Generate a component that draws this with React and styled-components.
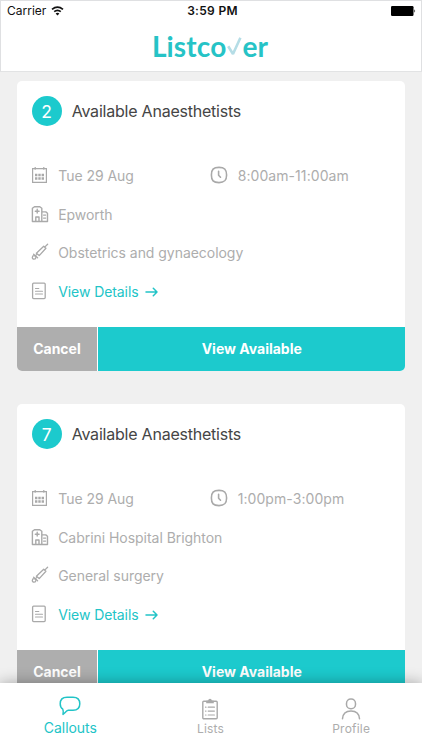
import React from 'react';
import styled, { createGlobalStyle } from 'styled-components';

const GlobalStyle = createGlobalStyle`
  * {
    box-sizing: border-box;
  }
  body {
    margin: 0;
    background: #f0f0f0;
    font-family: Inter, Roboto, sans-serif;
  }
`;
const Screen = styled.div`
  width: 422px;
  height: 750px;
  display: flex;
  flex-direction: column;
  overflow: hidden;
  background: #f0f0f0;
`;
const Header = styled.header`
  flex: none;
  height: 72px;
  background: #fff;
  border: 1px solid #dfe0e2;
  border-bottom-color: #e2e3e4;
`;
const StatusBar = styled.div`
  height: 20px;
  padding: 0 5px 0 6px;
  display: grid;
  grid-template-columns: 1fr auto 1fr;
  align-items: center;
  color: #111;
  font-size: 12px;
  line-height: 20px;
`;
const Carrier = styled.div`
  display: flex;
  align-items: center;
  gap: 5px;
  letter-spacing: 0;
`;
const Clock = styled.div`
  padding-left: 2px;
  font-weight: 600;
  font-size: 12px;
  letter-spacing: 0.3px;
`;
const Battery = styled.div`
  display: flex;
  justify-content: flex-end;
`;
const Logo = styled.div`
  height: 50px;
  padding-right: 2px;
  display: flex;
  align-items: center;
  justify-content: center;
  color: #26c3c6;
  font-family: Lato, sans-serif;
  font-size: 28px;
  font-weight: 700;
  letter-spacing: 0.15px;
  line-height: 50px;
`;
const Content = styled.main`
  flex: 1;
  min-height: 0;
  overflow: hidden;
  padding: 9px 16.7px 0;
  display: flex;
  flex-direction: column;
  gap: 33px;
`;
const Card = styled.section`
  flex: none;
  height: 290px;
  display: flex;
  flex-direction: column;
  overflow: hidden;
  border-radius: 5px;
  background: #fff;
`;
const CardHead = styled.div`
  height: 75px;
  padding: 15px 15px 0;
  display: flex;
  align-items: flex-start;
  gap: 10px;
`;
const Count = styled.div`
  width: 30px;
  height: 30px;
  border-radius: 50%;
  background: #1ccacd;
  color: #fff;
  font-size: 17.5px;
  font-weight: 400;
  line-height: 31px;
  text-align: center;
`;
const Title = styled.h2`
  margin: 0;
  color: #454545;
  font-size: 16px;
  font-weight: 400;
  line-height: 31px;
  letter-spacing: -0.22px;
`;
const Details = styled.div`
  flex: 1;
  padding: 0.5px 0 0 14px;
`;
const DetailRow = styled.div`
  height: 38.5px;
  display: flex;
  align-items: center;
`;
const Detail = styled.div`
  width: ${props => props.$width || 'auto'};
  display: flex;
  align-items: center;
  gap: 6px;
  color: ${props => (props.$link ? '#22c4c7' : '#adadad')};
  font-size: 14px;
  letter-spacing: ${props => props.$spacing || '-0.04px'};
  white-space: nowrap;
`;
const IconSlot = styled.span`
  width: 21.5px;
  flex: none;
  padding-bottom: 1px;
`;
const Icon = styled.svg`
  flex: none;
  display: block;
  fill: none;
  stroke: ${props => props.$color || '#a9a9a9'};
  stroke-width: ${props => props.$stroke || 1.3};
  stroke-linecap: round;
  stroke-linejoin: round;
`;
const Actions = styled.div`
  flex: none;
  height: 44.5px;
  display: flex;
  gap: 1px;
`;
const Action = styled.button`
  width: ${props => (props.$primary ? 'auto' : '80.5px')};
  flex: ${props => (props.$primary ? 1 : 'none')};
  padding: 0;
  border: 0;
  background: ${props => (props.$primary ? '#1ccacd' : '#aeaeae')};
  color: #fff;
  font-family: inherit;
  font-size: 14px;
  font-weight: 700;
  letter-spacing: 0;
`;
const TabBar = styled.nav`
  position: relative;
  flex: none;
  height: 67px;
  display: grid;
  grid-template-columns: repeat(3, 1fr);
  background: #fff;
  box-shadow: 0 0 14px rgba(0, 0, 0, 0.32);
`;
const Tab = styled.div`
  padding: ${props => (props.$active ? '13px 0 0' : '15px 1px 0 0')};
  display: flex;
  flex-direction: column;
  align-items: center;
  gap: ${props => (props.$active ? '2px' : '0')};
  color: ${props => (props.$active ? '#22c4c7' : '#adadad')};
  font-size: ${props => (props.$active ? '14px' : '12px')};
  line-height: ${props => (props.$active ? '20px' : '18px')};
  letter-spacing: ${props => (props.$active ? '-0.05px' : '0.2px')};
`;

const WifiIcon = () => (
  <Icon width="13" height="10" viewBox="0 0 13 10" $color="#111" $stroke="1.7">
    <path d="M1 3.3Q6.5-1.2 12 3.3M3.2 5.7Q6.5 3 9.8 5.7" strokeLinecap="butt" />
    <path d="M6.5 9.4L4.6 7.4Q6.5 6 8.4 7.4Z" fill="#111" stroke="none" />
  </Icon>
);
const BatteryIcon = () => (
  <Icon width="25" height="10" viewBox="0 0 25 10">
    <rect width="22.5" height="10" rx="1.2" fill="#000" stroke="none" />
    <path d="M23.4 3.2Q25 5 23.4 6.8Z" fill="#000" stroke="none" />
  </Icon>
);
const LogoTick = () => (
  <Icon width="16" height="20" viewBox="0 0 16 20" $color="#b5dde6" $stroke="2.6">
    <path d="M2.2 10.3L7 18L14.4 1.8" strokeLinecap="butt" strokeLinejoin="bevel" />
  </Icon>
);
const CalendarIcon = () => (
  <Icon width="18" height="18" viewBox="0 0 18 18" $stroke="1.2">
    <path d="M1.6 2.7H15.4V16.4H1.6ZM4.2 1V3.8M12.8 1V3.8" strokeLinecap="butt" strokeLinejoin="miter" />
    <path d="M4 9H6.4M7.3 9H9.7M10.6 9H13M4 12.5H6.4M7.3 12.5H9.7M10.6 12.5H13" strokeWidth="2.3" strokeLinecap="butt" />
  </Icon>
);
const ClockIcon = () => (
  <Icon width="18" height="18" viewBox="0 0 18 18" $stroke="1.6">
    <path d="M9 1.4C14.7 1.4 16.6 3.5 16.6 9S14.7 16.6 9 16.6S1.4 14.5 1.4 9S3.3 1.4 9 1.4Z" />
    <path d="M8.6 5.3V9.2L10.5 11.2" />
  </Icon>
);
const HospitalIcon = () => (
  <Icon width="18" height="18" viewBox="0 0 18 18" $stroke="1.4">
    <path d="M10.5 16.5H1.4V3.3L3.5 1.7H8.8L10.8 3.3V16.5H16.5V8.2L14.8 6.9H11M4.8 16.2V12H8V16.2" />
    <path d="M6.2 4.3V8.1M4.3 6.2H8.1M12.6 10.1H14.6M12.6 13.1H14.6" />
  </Icon>
);
const SyringeIcon = () => (
  <Icon width="18" height="18" viewBox="0 0 18 18" $stroke="1.3">
    <path d="M16.6 1.2L14.2 3.6M12.7 3.2L14.9 5.2L8.2 12.6L5.4 10.2Z" />
    <path d="M2.6 11.2L6.6 14.8M5.6 11.6L4.2 13" />
    <circle cx="3.1" cy="14.4" r="1.8" />
  </Icon>
);
const NoteIcon = () => (
  <Icon width="18" height="18" viewBox="0 0 18 18" $stroke="1.3">
    <rect x="1.6" y="1.2" width="12.6" height="15.4" rx="1" />
    <path d="M4.5 6.5H7.8M4.5 9.2H11.5M4.5 12H11.5" strokeWidth="1.1" />
  </Icon>
);
const ArrowIcon = () => (
  <Icon width="13" height="12" viewBox="0 0 13 12" $color="#22c4c7" $stroke="1.5">
    <path d="M1 7H12M8.3 3.3L12 7L8.3 10.7" />
  </Icon>
);
const BubbleIcon = () => (
  <Icon width="22" height="20" viewBox="0 0 22 20" $color="#22c4c7" $stroke="1.5">
    <path d="M8 1.2H14C18.5 1.2 20.8 3.7 20.8 7.8S18.2 14.3 14 14.3H9.2C7.4 14.6 5.7 17.2 4 18.4C4.4 16.3 4.4 14.5 3.8 13.2C2 12 1.2 10 1.2 7.8C1.2 3.7 3.5 1.2 8 1.2Z" />
  </Icon>
);
const ClipboardIcon = () => (
  <Icon width="16" height="22" viewBox="0 0 16 22" $stroke="1.4">
    <rect x="0.8" y="3.2" width="14.4" height="17.6" rx="1" />
    <path d="M4.2 5.2V2.8L6.1 2.5Q6.4 0.7 8 0.7T9.9 2.5L11.8 2.8V5.2Z" fill="#a9a9a9" stroke="none" />
    <path d="M3.5 9.2H4M6.2 9.2H12.4M3.5 13.1H4M6.2 13.1H12.4M3.5 17H4M6.2 17H12.4" strokeWidth="1.2" />
  </Icon>
);
const PersonIcon = () => (
  <Icon width="20" height="22" viewBox="0 0 20 22" $stroke="1.5">
    <rect x="5.5" y="1.1" width="9" height="9.6" rx="4.3" />
    <path d="M1.5 20.8C1.8 15.8 5 13 10 13S18.2 15.8 18.5 20.8" />
  </Icon>
);

const callouts = [
  {
    count: 2,
    date: 'Tue 29 Aug',
    time: '8:00am-11:00am',
    hospital: 'Epworth',
    specialty: 'Obstetrics and gynaecology'
  },
  {
    count: 7,
    date: 'Tue 29 Aug',
    time: '1:00pm-3:00pm',
    hospital: 'Cabrini Hospital Brighton',
    specialty: 'General surgery'
  }
];

const Callout = props => (
  <Card>
    <CardHead>
      <Count>{props.count}</Count>
      <Title>Available Anaesthetists</Title>
    </CardHead>
    <Details>
      <DetailRow>
        <Detail $width="179.5px">
          <IconSlot>
            <CalendarIcon />
          </IconSlot>
          <span>{props.date}</span>
        </Detail>
        <Detail $spacing="0.07px">
          <IconSlot>
            <ClockIcon />
          </IconSlot>
          <span>{props.time}</span>
        </Detail>
      </DetailRow>
      <DetailRow>
        <Detail>
          <IconSlot>
            <HospitalIcon />
          </IconSlot>
          <span>{props.hospital}</span>
        </Detail>
      </DetailRow>
      <DetailRow>
        <Detail>
          <IconSlot>
            <SyringeIcon />
          </IconSlot>
          <span>{props.specialty}</span>
        </Detail>
      </DetailRow>
      <DetailRow>
        <Detail $link $spacing="-0.08px">
          <IconSlot>
            <NoteIcon />
          </IconSlot>
          <span>View Details</span>
          <ArrowIcon />
        </Detail>
      </DetailRow>
    </Details>
    <Actions>
      <Action>Cancel</Action>
      <Action $primary>View Available</Action>
    </Actions>
  </Card>
);

const App = () => (
  <React.Fragment>
    <GlobalStyle />
    <Screen>
      <Header>
        <StatusBar>
          <Carrier>
            <span>Carrier</span>
            <WifiIcon />
          </Carrier>
          <Clock>3:59 PM</Clock>
          <Battery>
            <BatteryIcon />
          </Battery>
        </StatusBar>
        <Logo>
          <span>Listco</span>
          <LogoTick />
          <span>er</span>
        </Logo>
      </Header>
      <Content>
        {callouts.map(callout => (
          <Callout key={callout.count} {...callout} />
        ))}
      </Content>
      <TabBar>
        <Tab $active>
          <BubbleIcon />
          <span>Callouts</span>
        </Tab>
        <Tab>
          <ClipboardIcon />
          <span>Lists</span>
        </Tab>
        <Tab>
          <PersonIcon />
          <span>Profile</span>
        </Tab>
      </TabBar>
    </Screen>
  </React.Fragment>
);

export default App;
